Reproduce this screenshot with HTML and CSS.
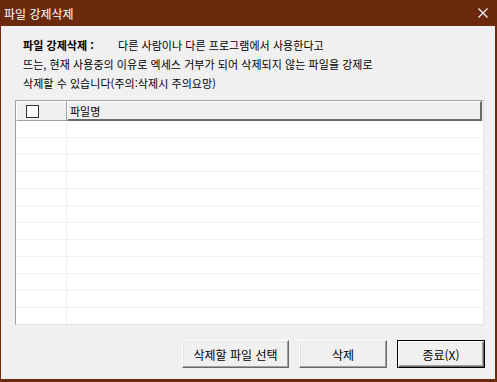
FILE: index.html
```html
<!DOCTYPE html>
<html lang="ko">
<head>
<meta charset="utf-8">
<title>파일 강제삭제</title>
<link rel="stylesheet" href="styles.css">
</head>
<body>
<div class="window">
  <div class="titlebar">
    <span class="title">파일 강제삭제</span>
    <svg class="close" width="10" height="10" viewBox="0 0 10 10"><path d="M0.5 0.5L9.5 9.5M9.5 0.5L0.5 9.5" stroke="#fff" stroke-width="1.1" fill="none"/></svg>
  </div>
  <div class="client">
    <div class="desc">
      <div class="line"><span class="label">파일 강제삭제 :</span>다른 사람이나 다른 프로그램에서 사용한다고</div>
      <div class="line">뜨는, 현재 사용중의 이유로 엑세스 거부가 되어 삭제되지 않는 파일을 강제로</div>
      <div class="line">삭제할 수 있습니다(주의:삭제시 주의요망)</div>
    </div>
    <div class="grid">
      <div class="head">
        <div class="hcell hcheck"><span class="checkbox"></span></div>
        <div class="hcell hname">파일명</div>
      </div>
      <div class="rows">
        <div class="row"><div class="c1"></div><div class="c2"></div></div>
        <div class="row"><div class="c1"></div><div class="c2"></div></div>
        <div class="row"><div class="c1"></div><div class="c2"></div></div>
        <div class="row"><div class="c1"></div><div class="c2"></div></div>
        <div class="row"><div class="c1"></div><div class="c2"></div></div>
        <div class="row"><div class="c1"></div><div class="c2"></div></div>
        <div class="row"><div class="c1"></div><div class="c2"></div></div>
        <div class="row"><div class="c1"></div><div class="c2"></div></div>
        <div class="row"><div class="c1"></div><div class="c2"></div></div>
        <div class="row"><div class="c1"></div><div class="c2"></div></div>
        <div class="row"><div class="c1"></div><div class="c2"></div></div>
        <div class="row"><div class="c1"></div><div class="c2"></div></div>
      </div>
    </div>
    <div class="buttons">
      <button class="btn btn-wide">삭제할 파일 선택</button>
      <button class="btn">삭제</button>
      <button class="btn btn-default">종료(X)</button>
    </div>
  </div>
</div>
</body>
</html>
```

FILE: styles.css
```css
* { box-sizing: border-box; }
html, body { margin: 0; padding: 0; }
body {
  width: 497px;
  height: 382px;
  overflow: hidden;
  font-family: "Noto Sans CJK KR", "Noto Sans", sans-serif;
  font-size: 11px;
  color: #000;
  background: #6b2a0e;
}
.window {
  width: 497px;
  height: 382px;
  display: flex;
  flex-direction: column;
  background: #6b2a0e;
  padding: 0 2px 3px 1px;
}
.titlebar {
  height: 26px;
  flex: none;
  display: flex;
  align-items: center;
  justify-content: space-between;
  padding: 0 9px 0 4px;
  color: #fff;
  font-size: 12px;
  margin: 0 -2px 0 -1px;
}
.close { display: block; }
.client {
  flex: 1;
  background: #f0f0f0;
  display: flex;
  flex-direction: column;
}
.desc {
  padding: 10px 0 0 22px;
  line-height: 19px;
  letter-spacing: 0.05px;
}
.line { white-space: nowrap; height: 19px; }
.label {
  display: inline-block;
  width: 95px;
  font-weight: bold;
}
.grid {
  margin: 7px 11px 0 14px;
  height: 225px;
  border-left: 1px solid #a0a0a0;
  border-top: 1px solid #a0a0a0;
  border-right: 1px solid #e3e3e3;
  border-bottom: 1px solid #e3e3e3;
  background: #fff;
  display: flex;
  flex-direction: column;
  overflow: hidden;
}
.head {
  display: flex;
  height: 20px;
  flex: none;
  background: #f0f0f0;
}
.hcell {
  border-top: 1px solid #fff;
  border-left: 1px solid #fff;
  border-right: 1px solid #a0a0a0;
  border-bottom: 1px solid #a0a0a0;
  display: flex;
  align-items: center;
}
.hcheck {
  width: 51px;
  flex: none;
  padding-left: 9px;
}
.hname {
  flex: 1;
  padding-left: 2px;
  border-right: 2px solid #696969;
  border-bottom: 2px solid #696969;
  margin-right: 1px;
}
.checkbox {
  width: 13px;
  height: 13px;
  border: 1px solid #333;
  background: #fff;
  display: block;
  margin-top: 1px;
}
.rows { flex: 1; display: flex; flex-direction: column; }
.row {
  height: 17px;
  flex: none;
  display: flex;
  border-bottom: 1px solid #f0f0f0;
}
.c1 { width: 51px; border-right: 1px solid #f0f0f0; }
.c2 { flex: 1; }
.buttons {
  display: flex;
  justify-content: flex-end;
  gap: 10px;
  padding: 15px 10px 0 0;
}
.btn {
  font-family: "Noto Sans CJK KR", "Noto Sans", sans-serif;
  font-size: 12px;
  color: #000;
  width: 88px;
  height: 28px;
  padding: 0;
  background: #f0f0f0;
  border-top: 1px solid #fff;
  border-left: 1px solid #fff;
  border-right: 1px solid #696969;
  border-bottom: 1px solid #696969;
  box-shadow: inset -1px -1px 0 #a0a0a0, inset 1px 1px 0 #e3e3e3;
}
.btn-wide { width: 107px; }
.btn-default {
  border: 1px solid #000;
  box-shadow: inset 1px 1px 0 #fff, inset -1px -1px 0 #696969, inset -2px -2px 0 #a0a0a0;
}
```
